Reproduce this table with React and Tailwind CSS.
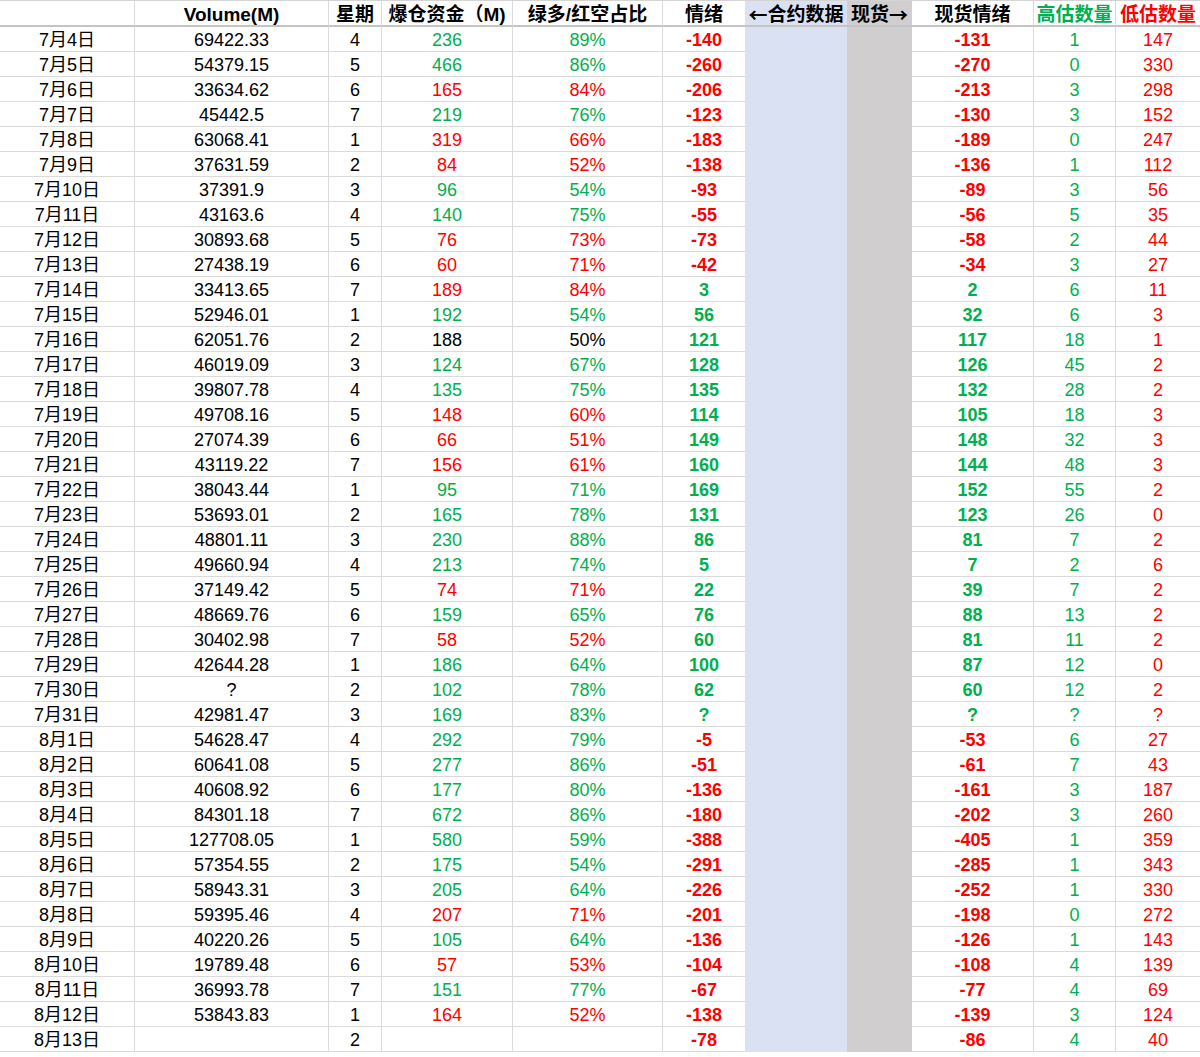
const G = "text-[#00b050]";
const R = "text-[#ff0000]";
const K = "text-black";

// date, volume, weekday, liq, liqColor, pct, pctColor, emotion, spot, high, low
const rows = [
  ["7月4日", "69422.33", "4", "236", G, "89%", G, "-140", "-131", "1", "147"],
  ["7月5日", "54379.15", "5", "466", G, "86%", G, "-260", "-270", "0", "330"],
  ["7月6日", "33634.62", "6", "165", R, "84%", R, "-206", "-213", "3", "298"],
  ["7月7日", "45442.5", "7", "219", G, "76%", G, "-123", "-130", "3", "152"],
  ["7月8日", "63068.41", "1", "319", R, "66%", R, "-183", "-189", "0", "247"],
  ["7月9日", "37631.59", "2", "84", R, "52%", R, "-138", "-136", "1", "112"],
  ["7月10日", "37391.9", "3", "96", G, "54%", G, "-93", "-89", "3", "56"],
  ["7月11日", "43163.6", "4", "140", G, "75%", G, "-55", "-56", "5", "35"],
  ["7月12日", "30893.68", "5", "76", R, "73%", R, "-73", "-58", "2", "44"],
  ["7月13日", "27438.19", "6", "60", R, "71%", R, "-42", "-34", "3", "27"],
  ["7月14日", "33413.65", "7", "189", R, "84%", R, "3", "2", "6", "11"],
  ["7月15日", "52946.01", "1", "192", G, "54%", G, "56", "32", "6", "3"],
  ["7月16日", "62051.76", "2", "188", K, "50%", K, "121", "117", "18", "1"],
  ["7月17日", "46019.09", "3", "124", G, "67%", G, "128", "126", "45", "2"],
  ["7月18日", "39807.78", "4", "135", G, "75%", G, "135", "132", "28", "2"],
  ["7月19日", "49708.16", "5", "148", R, "60%", R, "114", "105", "18", "3"],
  ["7月20日", "27074.39", "6", "66", R, "51%", R, "149", "148", "32", "3"],
  ["7月21日", "43119.22", "7", "156", R, "61%", R, "160", "144", "48", "3"],
  ["7月22日", "38043.44", "1", "95", G, "71%", G, "169", "152", "55", "2"],
  ["7月23日", "53693.01", "2", "165", G, "78%", G, "131", "123", "26", "0"],
  ["7月24日", "48801.11", "3", "230", G, "88%", G, "86", "81", "7", "2"],
  ["7月25日", "49660.94", "4", "213", G, "74%", G, "5", "7", "2", "6"],
  ["7月26日", "37149.42", "5", "74", R, "71%", R, "22", "39", "7", "2"],
  ["7月27日", "48669.76", "6", "159", G, "65%", G, "76", "88", "13", "2"],
  ["7月28日", "30402.98", "7", "58", R, "52%", R, "60", "81", "11", "2"],
  ["7月29日", "42644.28", "1", "186", G, "64%", G, "100", "87", "12", "0"],
  ["7月30日", "?", "2", "102", G, "78%", G, "62", "60", "12", "2"],
  ["7月31日", "42981.47", "3", "169", G, "83%", G, "?", "?", "?", "?"],
  ["8月1日", "54628.47", "4", "292", G, "79%", G, "-5", "-53", "6", "27"],
  ["8月2日", "60641.08", "5", "277", G, "86%", G, "-51", "-61", "7", "43"],
  ["8月3日", "40608.92", "6", "177", G, "80%", G, "-136", "-161", "3", "187"],
  ["8月4日", "84301.18", "7", "672", G, "86%", G, "-180", "-202", "3", "260"],
  ["8月5日", "127708.05", "1", "580", G, "59%", G, "-388", "-405", "1", "359"],
  ["8月6日", "57354.55", "2", "175", G, "54%", G, "-291", "-285", "1", "343"],
  ["8月7日", "58943.31", "3", "205", G, "64%", G, "-226", "-252", "1", "330"],
  ["8月8日", "59395.46", "4", "207", R, "71%", R, "-201", "-198", "0", "272"],
  ["8月9日", "40220.26", "5", "105", G, "64%", G, "-136", "-126", "1", "143"],
  ["8月10日", "19789.48", "6", "57", R, "53%", R, "-104", "-108", "4", "139"],
  ["8月11日", "36993.78", "7", "151", G, "77%", G, "-67", "-77", "4", "69"],
  ["8月12日", "53843.83", "1", "164", R, "52%", R, "-138", "-139", "3", "124"],
  ["8月13日", "", "2", "", K, "", K, "-78", "-86", "4", "40"],
];

const cols = "grid grid-cols-[135px_194px_53px_131px_150px_82px_102px_65px_122px_82px_84px]";
const cell = "h-[25px] flex items-center justify-center pt-[2px] border-b border-[#dadada] whitespace-nowrap";
const line = "border-r border-[#dadada]";
const cjk = { fontFamily: '"Noto Sans CJK SC", sans-serif' };

const moodColor = (v) => (v.startsWith("-") ? R : G);

const App = () => {
  return (
    <div
      className="w-[1200px] h-[1057px] overflow-hidden bg-white text-black"
      style={{ fontFamily: '"Liberation Sans", "Noto Sans CJK SC", sans-serif' }}
    >
      <div className={`${cols} border-t border-[#d4d4d4] font-bold text-[19px]`}>
        {[
          ["", line, K],
          ["Volume(M)", line, K],
          ["星期", line, K],
          ["爆仓资金（M)", line, K],
          ["绿多/红空占比", line, K],
          ["情绪", "", K],
          [<><span style={cjk}>←</span>合约数据</>, "bg-[#d9e1f2]", K],
          [<>现货<span style={cjk}>→</span></>, "bg-[#d0cece]", K],
          ["现货情绪", line, K],
          ["高估数量", line, G],
          ["低估数量", "", R],
        ].map(([t, extra, c], i) => (
          <div
            key={i}
            className={`h-[26px] flex items-center justify-center pt-[5px] border-b-2 border-b-[#c4c4c4] whitespace-nowrap ${extra} ${c}`}
          >
            {t}
          </div>
        ))}
      </div>

      {rows.map((r, i) => (
        <div key={i} className={`${cols} text-[18px]`}>
          <div className={`${cell} ${line}`}>{r[0]}</div>
          <div className={`${cell} ${line}`}>{r[1]}</div>
          <div className={`${cell} ${line}`}>{r[2]}</div>
          <div className={`${cell} ${line} ${r[4]}`}>{r[3]}</div>
          <div className={`${cell} ${line} ${r[6]}`}>{r[5]}</div>
          <div className={`${cell} font-bold ${moodColor(r[7])}`}>{r[7]}</div>
          <div className={`${cell} bg-[#d9e1f2] border-b-transparent`}></div>
          <div className={`${cell} bg-[#d0cece] border-b-transparent`}></div>
          <div className={`${cell} ${line} font-bold ${moodColor(r[8])}`}>{r[8]}</div>
          <div className={`${cell} ${line} ${G}`}>{r[9]}</div>
          <div className={`${cell} ${R}`}>{r[10]}</div>
        </div>
      ))}
    </div>
  );
};

export default App;
